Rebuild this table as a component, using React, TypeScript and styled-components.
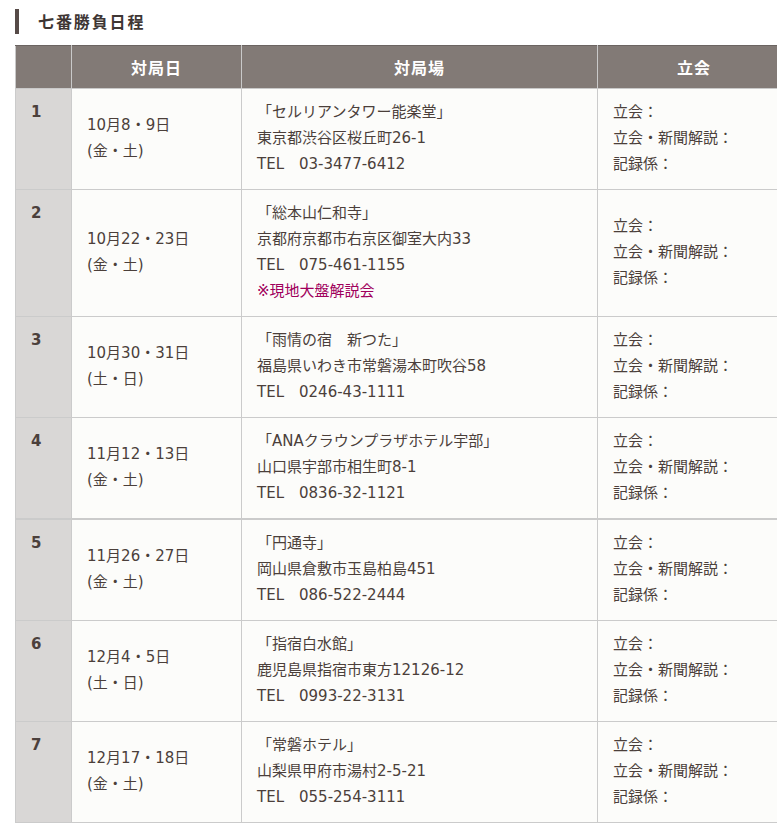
import React from "react";
import styled, { createGlobalStyle } from "styled-components";

const GlobalStyle = createGlobalStyle`
  html, body {
    margin: 0;
    padding: 0;
    background: #ffffff;
    overflow: hidden;
  }
  body {
    font-family: "Noto Sans CJK JP", "Noto Sans", sans-serif;
  }
`;

const Page = styled.div`
  padding: 9px 0 0 15px;
  width: 780px;
`;

const Heading = styled.h2`
  margin: 0 0 11px 0;
  display: flex;
  align-items: center;
  height: 25px;
  border-left: 4px solid #564b48;
  padding-left: 19px;
  font-size: 16px;
  font-weight: 700;
  letter-spacing: 1.9px;
  color: #3e3634;
  line-height: 25px;
`;

const Table = styled.table`
  border-collapse: collapse;
  width: 775px;
  table-layout: fixed;
  font-size: 15px;
  font-family: "DejaVu Sans", "Noto Sans CJK JP", sans-serif;
  color: #4b3f3a;
`;

const HeadCell = styled.th<{ $w: number }>`
  width: ${(p) => p.$w}px;
  background: #827a76;
  color: #ffffff;
  font-family: "Noto Sans CJK JP", sans-serif;
  font-weight: 700;
  font-size: 16px;
  letter-spacing: 1px;
  height: 43px;
  padding: 0 15px;
  text-align: center;
  border: 1px solid #c9c9c9;
  border-top: 1px solid #6b6461;
  box-sizing: border-box;
`;

const Row = styled.tr<{ $thick?: boolean }>`
  td {
    border-top: ${(p) => (p.$thick ? "2px" : "1px")} solid #cbcbcb;
  }
`;

const NumCell = styled.td`
  background: #d9d7d6;
  vertical-align: top;
  font-weight: 700;
  padding: 10px 15px;
  line-height: 26px;
  border: 1px solid #cbcbcb;
  color: #4b403c;
`;

const Cell = styled.td`
  background: #fcfcfa;
  vertical-align: middle;
  padding: 10px 15px 12px;
  line-height: 26px;
  border: 1px solid #cbcbcb;
`;

const Line = styled.div`
  white-space: nowrap;
`;

const Note = styled.div`
  color: #a0005c;
`;

type Game = {
  n: number;
  date: string;
  days: string;
  venue: string;
  addr: string;
  tel: string;
  note?: string;
  thick?: boolean;
};

const games: Game[] = [
  { n: 1, date: "10月8・9日", days: "(金・土)", venue: "「セルリアンタワー能楽堂」", addr: "東京都渋谷区桜丘町26-1", tel: "TEL　03-3477-6412" },
  { n: 2, date: "10月22・23日", days: "(金・土)", venue: "「総本山仁和寺」", addr: "京都府京都市右京区御室大内33", tel: "TEL　075-461-1155", note: "※現地大盤解説会" },
  { n: 3, date: "10月30・31日", days: "(土・日)", venue: "「雨情の宿　新つた」", addr: "福島県いわき市常磐湯本町吹谷58", tel: "TEL　0246-43-1111" },
  { n: 4, date: "11月12・13日", days: "(金・土)", venue: "「ANAクラウンプラザホテル宇部」", addr: "山口県宇部市相生町8-1", tel: "TEL　0836-32-1121" },
  { n: 5, date: "11月26・27日", days: "(金・土)", venue: "「円通寺」", addr: "岡山県倉敷市玉島柏島451", tel: "TEL　086-522-2444", thick: true },
  { n: 6, date: "12月4・5日", days: "(土・日)", venue: "「指宿白水館」", addr: "鹿児島県指宿市東方12126-12", tel: "TEL　0993-22-3131" },
  { n: 7, date: "12月17・18日", days: "(金・土)", venue: "「常磐ホテル」", addr: "山梨県甲府市湯村2-5-21", tel: "TEL　055-254-3111" },
];

export default function App() {
  return (
    <>
      <GlobalStyle />
      <Page>
        <Heading>七番勝負日程</Heading>
        <Table>
          <thead>
            <tr>
              <HeadCell $w={56}></HeadCell>
              <HeadCell $w={170}>対局日</HeadCell>
              <HeadCell $w={356}>対局場</HeadCell>
              <HeadCell $w={193}>立会</HeadCell>
            </tr>
          </thead>
          <tbody>
            {games.map((g) => (
              <Row key={g.n} $thick={g.thick}>
                <NumCell>{g.n}</NumCell>
                <Cell>
                  <Line>{g.date}</Line>
                  <Line>{g.days}</Line>
                </Cell>
                <Cell>
                  <Line>{g.venue}</Line>
                  <Line>{g.addr}</Line>
                  <Line>{g.tel}</Line>
                  {g.note && <Note>{g.note}</Note>}
                </Cell>
                <Cell>
                  <Line>立会：</Line>
                  <Line>立会・新聞解説：</Line>
                  <Line>記録係：</Line>
                </Cell>
              </Row>
            ))}
          </tbody>
        </Table>
      </Page>
    </>
  );
}
